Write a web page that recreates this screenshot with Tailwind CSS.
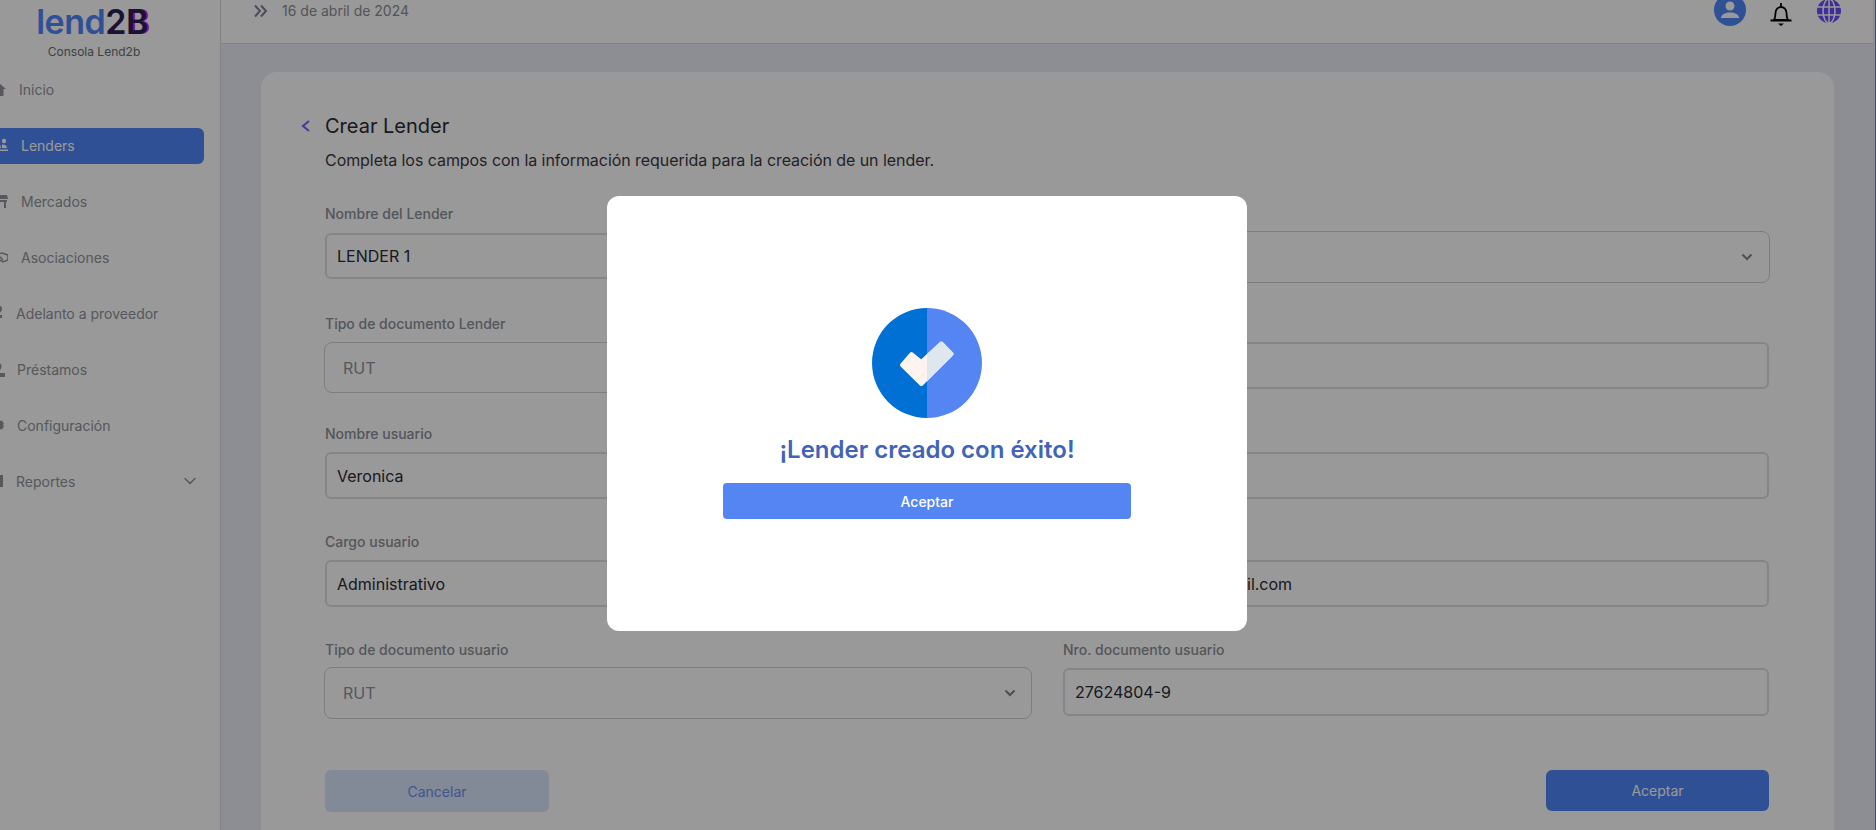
<!DOCTYPE html>
<html lang="es">
<head>
<meta charset="utf-8">
<title>Crear Lender</title>
<script src="https://cdn.jsdelivr.net/npm/@tailwindcss/browser@4"></script>
</head>
<body class="m-0 overflow-hidden font-['Inter',sans-serif]">
<div class="relative w-[1876px] h-[830px] overflow-hidden bg-[#e9edf5]">
  <div class="flex w-[1892px] h-[839px] -ml-[16px] -mt-[9px]">
    <!-- Sidebar -->
    <aside class="w-[237px] shrink-0 bg-white border-r border-[#d5d8dd] h-full">
      <div class="h-[75px] flex flex-col items-center pr-[16px]">
        <div class="leading-[40px] h-[40px] mt-[11px] -ml-[4px] text-[34px] font-semibold tracking-[-0.5px] whitespace-nowrap">
          <span class="text-[#5085f8]">lend</span><span class="text-[#2b1f55]">2</span><span class="text-[#2b1f55] [text-shadow:2px_0_0_#d41ef5]">B</span>
        </div>
        <div class="text-[12px] leading-[16px] mt-[2px] text-[#6b6c72]">Consola Lend2b</div>
      </div>
      <nav class="mt-[6px] pr-[16px] flex flex-col gap-[20px] text-[14px] text-[#8f939b]">
        <a class="h-[36px] pb-[2px] flex items-center gap-[13px] pl-[6px] rounded-md">
          <svg class="w-4 h-4 shrink-0" viewBox="0 0 16 16" fill="#8f939b"><path d="M8 1 0 8h2.500v7h3.500v-4h4v4h3.500V8H16z"/></svg>Inicio</a>
        <a class="h-[36px] pb-[2px] flex items-center gap-[13px] pl-[8px] rounded-md bg-[#5085f8] text-white">
          <svg class="w-4 h-4 shrink-0" viewBox="0 0 16 16" fill="#fff"><circle cx="5" cy="4" r="2.500"/><circle cx="12" cy="4" r="2.200"/><path d="M1 11c0-3 2-4 4-4s4 1 4 4zM10 7.500c3 0 5 1 5 3.500h-5zM0 12.500h16V14H0z"/></svg>Lenders</a>
        <a class="h-[36px] pb-[2px] flex items-center gap-[13px] pl-[8px] rounded-md">
          <svg class="w-4 h-4 shrink-0" viewBox="0 0 16 16" fill="#8f939b"><path d="M1 2h14l1 4H0zM1 7h14v2h-1v6h-2V9H4v6H2V9H1z"/></svg>Mercados</a>
        <a class="h-[36px] pb-[2px] flex items-center gap-[13px] pl-[8px] rounded-md">
          <svg class="w-4 h-4 shrink-0" viewBox="0 0 16 16" fill="none" stroke="#8f939b" stroke-width="1.500"><path d="M0 4l6 1 4-1 6 2v5l-5 2-5-3-6-1zM6 5l-1 3 3 0 3 3"/></svg>Asociaciones</a>
        <a class="h-[36px] pb-[2px] flex items-center gap-[13px] pl-[3px] rounded-md">
          <svg class="w-4 h-4 shrink-0" viewBox="0 0 16 16" fill="#8f939b"><path d="M8 1h4c2 0 3 1 3 3s-1 3-3 4l-3 2h6v3H7v-3l4-3c1-1 1.500-1.500 1-2.500H8z"/></svg>Adelanto a proveedor</a>
        <a class="h-[36px] pb-[2px] flex items-center gap-[13px] pl-[5px] rounded-md">
          <svg class="w-4 h-4 shrink-0" viewBox="0 0 16 16" fill="#8f939b"><circle cx="8" cy="5.500" r="4.500"/><path d="M1 12h14a2 2 0 0 1 0 4H1z"/></svg><span class="-ml-[1px]">Préstamos</span></a>
        <a class="h-[36px] pb-[2px] flex items-center gap-[13px] pl-[5px] rounded-md">
          <svg class="w-4 h-4 shrink-0" viewBox="0 0 16 16" fill="#8f939b"><path d="M6 2h4l1 2 2-.5 2 3.500-1.500 1 1.500 1-2 3.500-2-.5-1 2H6l-1-2-2 .5L1 9l1.500-1L1 7l2-3.500L5 4z"/></svg><span class="-ml-[1px]">Configuración</span></a>
        <a class="h-[36px] pb-[2px] flex items-center gap-[13px] pl-[3px] pr-[6px] rounded-md">
          <svg class="w-4 h-4 shrink-0" viewBox="0 0 16 16" fill="#8f939b"><path d="M3 2h13v12H3z"/></svg><span class="flex-1">Reportes</span>
          <svg class="w-[16px] h-[16px]" viewBox="0 0 16 16" fill="none" stroke="#8f939b" stroke-width="1.500" stroke-linecap="round" stroke-linejoin="round"><path d="M3 5.500l5 5 5-5"/></svg></a>
      </nav>
    </aside>
    <!-- Main -->
    <div class="flex-1 min-w-0 flex flex-col pr-[2px]">
      <header class="h-[53px] shrink-0 bg-white border-b border-[#d5d8dd] flex items-start">
        <div class="flex items-center pl-[33px] pt-[9px] gap-[14px] text-[#8a8d94] text-[14px] leading-[22px]">
          <svg class="w-[14px] h-[14px]" viewBox="0 0 14 14" fill="none" stroke="#7d8197" stroke-width="2"><path d="M1 1.500l5 5.500-5 5.500M7 1.500l5 5.500-5 5.500"/></svg>
          <span>16 de abril de 2024</span>
        </div>
        <div class="ml-auto flex items-start pr-[32px] pt-[3px] gap-[24px]">
          <svg class="w-[32px] h-[32px]" viewBox="0 0 32 32"><circle cx="16" cy="16" r="16" fill="#5085f8"/><circle cx="16" cy="12" r="4.500" fill="#fff"/><path d="M7 24c0-4 5-5.500 9-5.500s9 1.500 9 5.500z" fill="#fff"/></svg>
          <svg class="w-[22px] h-[24px] mt-[8px]" viewBox="0 0 22 24" fill="none" stroke="#000" stroke-width="1.800"><path d="M11 1v3M4 18c1.200-2 1.500-4 1.500-7 0-3.500 2.500-6 5.500-6s5.500 2.500 5.500 6c0 3 .3 5 1.500 7zM.5 18.500h21"/><path d="M8 21.500h6L11 24z" fill="#000" stroke="none"/></svg>
          <svg class="w-[24px] h-[24px] mt-[5px] ml-[1px]" viewBox="0 0 24 24"><circle cx="12" cy="12" r="12" fill="#6a4dff"/><g fill="none" stroke="#fff" stroke-width="1.500"><path d="M0 8h24M0 16h24M12 0v24"/><ellipse cx="12" cy="12" rx="6" ry="12"/></g></svg>
        </div>
      </header>
      <main class="flex-1 min-h-0 pl-[40px] pt-[28px]">
        <section class="flow-root w-[1573px] h-[800px] bg-white rounded-2xl pl-[64px] pr-[63px]">
          <div class="flex items-center h-[32px] mt-[38px] relative">
            <svg class="w-[10px] h-[12px] absolute -left-[24px]" viewBox="0 0 10 12" fill="none" stroke="#7d61ff" stroke-width="2.200"><path d="M8 1 2 6l6 5"/></svg>
            <h1 class="text-[20px] leading-[28px] text-[#2a2a33] font-normal">Crear Lender</h1>
          </div>
          <p class="text-[16px] leading-[24px] mt-[6px] text-[#3a3a42] tracking-[-0.06px]">Completa los campos con la información requerida para la creación de un lender.</p>

          <div class="grid grid-cols-[707px_707px] gap-x-[31px] text-[14px] mt-[32px]">
            <!-- row 1 -->
            <div class="h-[110px]">
              <label class="block h-[20px] leading-[20px] font-medium text-[#8b8f98]">Nombre del Lender</label>
              <div class="mt-[9px] h-[46px] border-2 border-[#dedede] rounded-md flex items-center pl-[10px] text-[16px] text-[#2a2a33]">LENDER 1</div>
            </div>
            <div class="h-[110px] pt-[27px]">
              <div class="h-[52px] border border-[#d0d0d0] rounded-lg flex items-center justify-end pr-[16px]">
                <svg class="w-[12px] h-[8px]" viewBox="0 0 12 8" fill="none" stroke="#808488" stroke-width="2"><path d="M1.500 1.500 6 6l4.500-4.500"/></svg>
              </div>
            </div>
            <!-- row 2 -->
            <div class="h-[110px] -ml-[1px]">
              <label class="block h-[20px] leading-[20px] pl-[1px] font-medium text-[#8b8f98]">Tipo de documento Lender</label>
              <div class="mt-[8px] h-[51px] border border-[#d0d0d0] rounded-lg flex items-center pl-[18px] text-[16px] text-[#8f939b]">RUT</div>
            </div>
            <div class="h-[110px] pt-[28px]">
              <div class="h-[47px] w-[706px] border-2 border-[#dedede] rounded-md"></div>
            </div>
            <!-- row 3 -->
            <div class="h-[108px]">
              <label class="block h-[20px] leading-[20px] font-medium text-[#8b8f98]">Nombre usuario</label>
              <div class="mt-[8px] h-[47px] border-2 border-[#dedede] rounded-md flex items-center pl-[10px] text-[16px] text-[#2a2a33]">Veronica</div>
            </div>
            <div class="h-[108px] pt-[28px]">
              <div class="h-[47px] w-[706px] border-2 border-[#dedede] rounded-md"></div>
            </div>
            <!-- row 4 -->
            <div class="h-[108px]">
              <label class="block h-[20px] leading-[20px] font-medium text-[#8b8f98]">Cargo usuario</label>
              <div class="mt-[8px] h-[47px] border-2 border-[#dedede] rounded-md flex items-center pl-[10px] text-[16px] text-[#2a2a33]">Administrativo</div>
            </div>
            <div class="h-[108px] pt-[28px]">
              <div class="h-[47px] w-[706px] border-2 border-[#dedede] rounded-md flex items-center text-[16px] text-[#2a2a33] pl-[182px]">il.com</div>
            </div>
            <!-- row 5 -->
            <div class="h-[130px] -ml-[1px]">
              <label class="block h-[20px] leading-[20px] pl-[1px] font-medium text-[#8b8f98]">Tipo de documento usuario</label>
              <div class="mt-[7px] h-[52px] border border-[#d0d0d0] rounded-lg flex items-center justify-between pl-[18px] pr-[15px] text-[16px] text-[#8f939b]">RUT
                <svg class="w-[12px] h-[8px]" viewBox="0 0 12 8" fill="none" stroke="#808488" stroke-width="2"><path d="M1.500 1.500 6 6l4.500-4.500"/></svg>
              </div>
            </div>
            <div class="h-[130px]">
              <label class="block h-[20px] leading-[20px] font-medium text-[#8b8f98]">Nro. documento usuario</label>
              <div class="mt-[8px] h-[48px] w-[706px] border-2 border-[#dedede] rounded-md flex items-center pl-[10px] text-[16px] text-[#2a2a33]">27624804-9</div>
            </div>
          </div>
          <div class="flex justify-between w-[1444px]">
            <button class="w-[224px] h-[42px] rounded-md bg-[#d7e6fa] text-[#6f8cf2] text-[14px]">Cancelar</button>
            <button class="w-[223px] h-[41px] rounded-md bg-[#5085f8] text-white text-[14px]">Aceptar</button>
          </div>
        </section>
      </main>
    </div>
    <div class="w-[1px] shrink-0 h-full bg-[#5085f8]"></div>
  </div>
  <div class="absolute inset-0 bg-black/40"></div>
  <div class="absolute inset-0 flex items-center justify-center pr-[22px] pb-[3px]">
    <div class="w-[640px] h-[435px] bg-white rounded-xl flex flex-col items-center pt-[112px]">
      <svg class="w-[110px] h-[110px]" viewBox="0 0 110 110">
        <defs><clipPath id="r"><rect x="55" y="0" width="55" height="110"/></clipPath></defs>
        <path d="M55 0a55 55 0 0 0 0 110z" fill="#0070d4"/><path d="M55 0a55 55 0 0 1 0 110z" fill="#5585f2"/>
        <path d="M30 57 39.500 46 49.300 54 69.300 35.500 79.500 46 49.300 76z" fill="#fff3f0" stroke="#fff3f0" stroke-width="4" stroke-linejoin="round"/>
        <path d="M30 57 39.500 46 49.300 54 69.300 35.500 79.500 46 49.300 76z" fill="#dfe7ee" stroke="#dfe7ee" stroke-width="4" stroke-linejoin="round" clip-path="url(#r)"/>
      </svg>
      <h2 class="text-[24px] leading-[32px] font-semibold text-[#3f64b8] mt-[16px]">¡Lender creado con éxito!</h2>
      <button class="w-[408px] h-[36px] mt-[17px] rounded bg-[#5585f2] text-white text-[14px] font-medium">Aceptar</button>
    </div>
  </div>
</div>
</body>
</html>
